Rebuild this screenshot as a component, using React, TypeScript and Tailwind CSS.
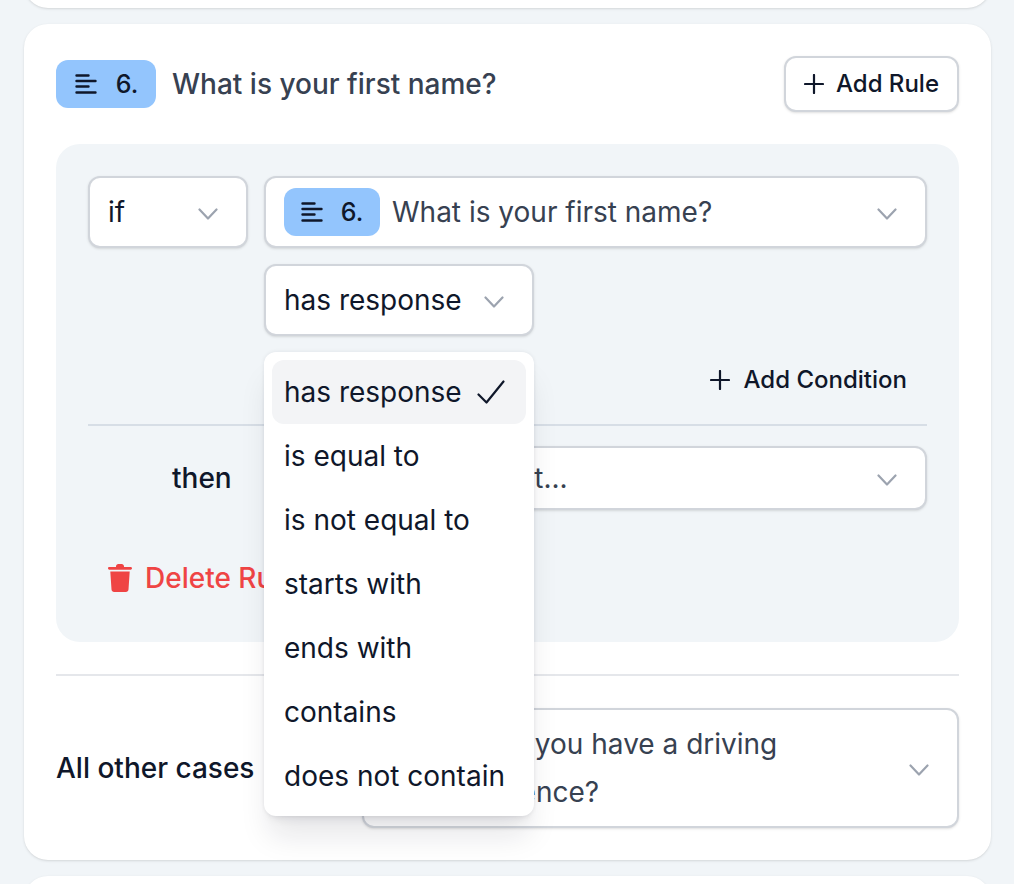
import React from 'react';

const operators = ['has response', 'is equal to', 'is not equal to', 'starts with', 'ends with', 'contains', 'does not contain'];

const TextIcon = () => (
  <svg viewBox="0 0 22 22" className="w-[22px] h-[22px] shrink-0" fill="none" stroke="currentColor" strokeWidth="2.4" strokeLinecap="round">
    <path d="M1.500 2.500h12M1.500 8h19M1.500 13.500h12M1.500 19.500h19" />
  </svg>
);

const Badge = ({ n, className = '' }: { n: string; className?: string }) => (
  <span className={`flex items-center justify-center h-12 shrink-0 rounded-xl bg-[#93c5fd] text-[25px] font-medium text-[#0f172a] ${className}`}>
    <TextIcon />
    {n}
  </span>
);

const Chevron = () => (
  <svg viewBox="0 0 20 20" className="w-5 h-5 shrink-0 text-[#9ca3af]" fill="none" stroke="currentColor" strokeWidth="2.200" strokeLinecap="round" strokeLinejoin="round">
    <path d="M1.500 7.500l8.500 9 8.500-9" />
  </svg>
);

const PlusIcon = () => (
  <svg viewBox="0 0 20 20" className="w-5 h-5 shrink-0" fill="none" stroke="currentColor" strokeWidth="2.200" strokeLinecap="round">
    <path d="M10 1v18M1 10h18" />
  </svg>
);

const selectClass = 'flex items-center justify-between bg-white rounded-xl border-2 border-[#d1d5db] shadow-sm pl-[18px] pr-[28px]';

const App: React.FC = () => {
  return (
    <div className="h-[884px] overflow-hidden bg-[#f1f5f8] pl-6 pr-[23px] flex flex-col gap-4 text-[28px] leading-12 text-[#0f172a] font-['Inter','Liberation_Sans',sans-serif]">
      <div className="-mt-10 h-12 shrink-0 bg-white rounded-[24px] shadow-sm" />

      <div className="h-[836px] shrink-0 bg-white rounded-[24px] shadow-sm p-8">
        <div className="flex items-center justify-between h-14">
          <div className="flex items-center gap-4">
            <Badge n="6." className="w-[100px] gap-[19px] pl-px" />
            <span className="text-[#374151] font-medium">What is your first name?</span>
          </div>
          <button className="flex items-center gap-3 h-14 px-[18px] bg-white rounded-xl border-2 border-[#d1d5db] shadow-sm text-[24px] font-medium">
            <PlusIcon />
            Add Rule
          </button>
        </div>

        <div className="mt-8 h-[498px] bg-[#f1f5f8] rounded-[24px] p-8">
          <div className="flex gap-4">
            <div className={`${selectClass} w-[160px] h-[72px]`}>
              if
              <Chevron />
            </div>
            <div className={`${selectClass} flex-1 h-[72px]`}>
              <div className="flex items-center gap-3">
                <Badge n="6." className="w-[96px] gap-[18px]" />
                <span className="text-[#374151]">What is your first name?</span>
              </div>
              <Chevron />
            </div>
          </div>

          <div className="relative mt-4 ml-[176px]">
            <div className={`${selectClass} w-[270px] h-[72px]`}>
              has response
              <Chevron />
            </div>
            <div className="mt-4 mr-5 h-14 flex items-center justify-end gap-[14px] text-[24px] font-medium">
              <PlusIcon />
              Add Condition
            </div>

            <div className="absolute z-10 left-0 top-[88px] w-[270px] h-[464px] bg-white rounded-xl p-2 shadow-[0_25px_30px_-5px_rgba(15,23,42,0.1),0_8px_10px_-6px_rgba(15,23,42,0.1),0_0_4px_rgba(15,23,42,0.08)]">
              {operators.map((op, i) => (
                <div key={op} className={`flex items-center gap-[15px] h-16 px-3 whitespace-nowrap rounded-xl ${i === 0 ? 'bg-[#f3f4f6]' : ''}`}>
                  {op}
                  {i === 0 && (
                    <svg viewBox="0 0 28 24" className="w-7 h-6 shrink-0" fill="none" stroke="currentColor" strokeWidth="2.200" strokeLinecap="round" strokeLinejoin="round">
                      <path d="M1.500 14.500l8 8L26.500 1.500" />
                    </svg>
                  )}
                </div>
              ))}
            </div>
          </div>

          <div className="mt-4 border-t-2 border-[#d7dee6]" />

          <div className="mt-5 flex items-center">
            <span className="ml-[84px] mr-[100px] font-medium">then</span>
            <div className={`${selectClass} flex-1 h-16`}>
              <span className="text-[#374151]">Select a target...</span>
              <Chevron />
            </div>
          </div>

          <div className="mt-11 ml-5 flex items-center gap-[13px] font-medium text-[#ef4444]">
            <svg viewBox="0 0 24 28" className="w-6 h-7 shrink-0" fill="currentColor">
              <path d="M8 2.300C8 1 9 0 10.300 0h3.400C15 0 16 1 16 2.300V3h6.700c.7 0 1.300.6 1.300 1.300s-.6 1.400-1.300 1.400H1.300C.6 5.700 0 5.100 0 4.300S.6 3 1.300 3H8zM2.300 7.500h19.400l-1.200 18c-.1 1.400-1.200 2.500-2.600 2.500H6.100c-1.400 0-2.500-1.100-2.600-2.500z" />
            </svg>
            Delete Rule
          </div>
        </div>

        <div className="mt-8 border-t-2 border-[#e5e7eb]" />

        <div className="mt-8 flex items-center justify-between">
          <span className="font-medium">All other cases</span>
          <div className={`${selectClass} w-[597px] h-[120px]`}>
            <div className="flex items-center gap-3 w-[500px]">
              <Badge n="7." className="w-[96px] gap-[18px]" />
              <span className="text-[#374151]">Do you have a driving licence?</span>
            </div>
            <Chevron />
          </div>
        </div>
      </div>

      <div className="h-12 shrink-0 bg-white rounded-[24px] shadow-sm" />
    </div>
  );
};

export default App;
